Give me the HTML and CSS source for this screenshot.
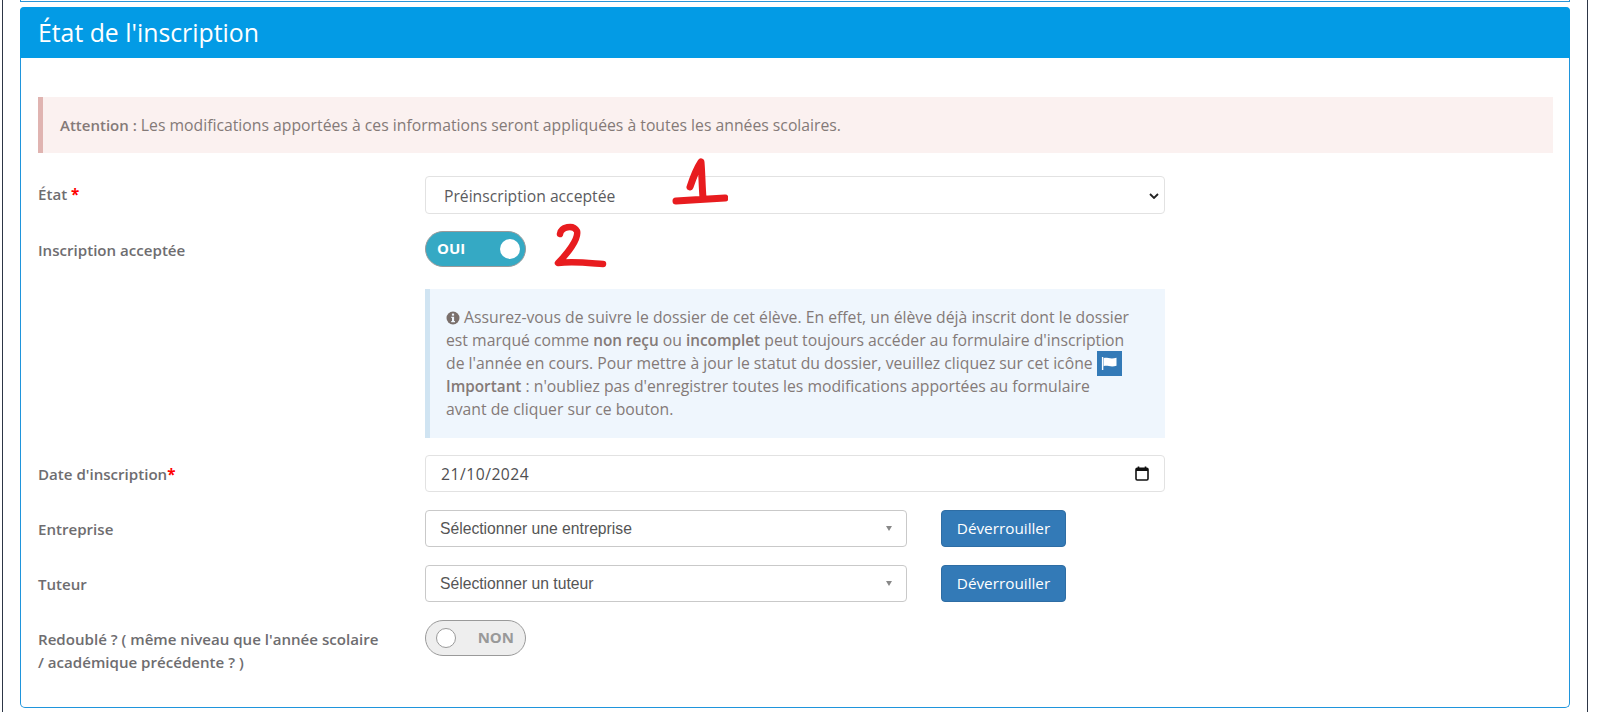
FILE: index.html
```html
<!DOCTYPE html>
<html lang="fr">
<head>
<meta charset="utf-8">
<title>État de l'inscription</title>
<link rel="stylesheet" href="styles.css">
</head>
<body>
<div class="page">
  <div class="prev-panel"></div>
  <section class="panel">
    <h2 class="panel-title">État de l'inscription</h2>
    <div class="panel-body">
      <div class="alert"><strong>Attention :</strong> Les modifications apportées à ces informations seront appliquées à toutes les années scolaires.</div>

      <div class="row row-state">
        <label class="label">État <span class="req">*</span></label>
        <div class="native-select wide"><span>Préinscription acceptée</span>
          <svg class="chev" width="10" height="6" viewBox="0 0 10 6"><path d="M1 1l4 4 4-4" fill="none" stroke="#222" stroke-width="1.800"/></svg>
        </div>
        <svg class="mark mark-1" width="60" height="52" viewBox="0 0 60 52"><path d="M22 33C25 24 29 14 33 8C34 20 34 32 35 44M8 47C24 46 42 45 57 44" fill="none" stroke="#e81c1f" stroke-width="7" stroke-linecap="round" stroke-linejoin="round"/></svg>
      </div>

      <div class="row row-toggle">
        <label class="label">Inscription acceptée</label>
        <div class="toggle on"><span class="toggle-text">OUI</span><span class="knob"></span></div>
        <svg class="mark mark-2" width="54" height="46" viewBox="0 0 54 46"><path d="M7 12C8 5 20 2 24 9C26 17 14 32 5 41C20 39 36 41 50 42" fill="none" stroke="#e81c1f" stroke-width="6.500" stroke-linecap="round" stroke-linejoin="round"/></svg>
      </div>

      <div class="row row-info">
        <div></div>
        <div class="info">
          <svg class="info-icon" width="14" height="14" viewBox="0 0 14 14"><circle cx="7" cy="7" r="6.500" fill="#7a6f6b"/><rect x="5.900" y="2.600" width="2.200" height="2" fill="#eff6fd"/><path d="M5.300 5.800H8.100V10H9V11.200H5.200V10H6V7H5.300Z" fill="#eff6fd"/></svg>
          Assurez-vous de suivre le dossier de cet élève. En effet, un élève déjà inscrit dont le dossier<br>est marqué comme <strong>non reçu</strong> ou <strong>incomplet</strong> peut toujours accéder au formulaire d'inscription<br>de l'année en cours. Pour mettre à jour le statut du dossier, veuillez cliquez sur cet icône <span class="flag-btn"><svg width="17" height="15" viewBox="0 0 17 15"><path d="M1.600 1V14" stroke="#fff" stroke-width="1.400"/><path d="M2.600 2.200C6 .8 8.800 3.800 15.500 1.800V9.800C9.500 11.800 6.500 8.800 2.600 10.200Z" fill="#fff"/></svg></span><br>
          <strong>Important</strong> : n'oubliez pas d'enregistrer toutes les modifications apportées au formulaire<br>avant de cliquer sur ce bouton.
        </div>
      </div>

      <div class="row row-date">
        <label class="label">Date d'inscription<span class="req">*</span></label>
        <div class="native-select wide date"><span>21/10/2024</span>
          <svg class="cal" width="14" height="15" viewBox="0 0 14 15"><path d="M3.500 0.500V3M10.500 0.500V3" stroke="#111" stroke-width="1.600"/><rect x="1" y="2.300" width="12" height="11.700" rx="1.200" fill="none" stroke="#111" stroke-width="1.600"/><rect x="1" y="2.300" width="12" height="2.700" fill="#111"/></svg>
        </div>
      </div>

      <div class="row row-select">
        <label class="label">Entreprise</label>
        <div class="select2"><span>Sélectionner une entreprise</span><i class="caret"></i></div>
        <button class="btn" type="button">Déverrouiller</button>
      </div>

      <div class="row row-select">
        <label class="label">Tuteur</label>
        <div class="select2"><span>Sélectionner un tuteur</span><i class="caret"></i></div>
        <button class="btn" type="button">Déverrouiller</button>
      </div>

      <div class="row row-last">
        <label class="label">Redoublé ? ( même niveau que l'année scolaire<br>/ académique précédente ? )</label>
        <div class="toggle off"><span class="knob"></span><span class="toggle-text">NON</span></div>
      </div>
    </div>
  </section>
</div>
</body>
</html>
```
FILE: styles.css
```css
* { box-sizing: border-box; }
html, body { margin: 0; height: 712px; overflow: hidden; background: #fff; }
body { font-family: "Open Sans", sans-serif; font-size: 15.750px; color: #847a78; }
.page {
  width: 1586px; height: 712px; margin-left: 2px;
  border-left: 1px solid #2d3646; border-right: 1px solid #2d3646;
  padding: 0 17px;
}
.prev-panel {
  height: 2px; border-bottom: 1px solid #2a94d6; border-left: 1px solid #2a94d6; border-right: 1px solid #2a94d6;
}
.panel {
  margin-top: 5px; height: 701px; border: 1px solid #1f95dc; border-top: 0; border-radius: 5px;
}
.panel-title {
  margin: 0 -1px; height: 51px; padding: 0 18px; background: #039be5; color: #fff;
  font-size: 24.800px; font-weight: 400; line-height: 51px; border-radius: 4px 4px 0 0;
}
.panel-body { padding: 39px 16px 0 17px; }
.alert {
  height: 56px; line-height: 56px; padding-left: 17px; background: #fbf1f0; border-left: 5px solid #e0b4b1;
}
.alert strong { font-size: 15px; font-weight: 600; }
.info strong { font-size: 15.300px; font-weight: 600; }
.row { display: grid; grid-template-columns: 387px 740px; position: relative; align-items: start; }
.label { font-weight: 600; color: #6e6d70; font-size: 15.100px; line-height: 23px; display: block; }
.req { color: #f00; font-weight: 700; }
.row-state { margin-top: 23px; }
.row-state .label { padding-top: 7px; }
.native-select {
  position: relative; height: 38px; display: flex; align-items: center; justify-content: space-between;
  background: #fff; border: 1px solid #e2e2e2; border-radius: 4px; padding: 2px 5px 0 18px;
  color: #5b5b5e; font-size: 15.700px;
}
.row-toggle { margin-top: 17px; }
.row-toggle .label { padding-top: 8px; }
.toggle {
  position: relative; width: 101px; height: 36px; border-radius: 18px; display: flex; align-items: center;
  border: 1px solid #9a9a9a; font-weight: 700; font-size: 15px;
}
.toggle.on { background: #35a9c4; color: #fff; padding: 0 5px 2px 11px; justify-content: space-between; }
.toggle.off { background: #eee; color: #999; padding: 0 11px 2px 10px; justify-content: space-between; }
.knob { width: 20px; height: 20px; border-radius: 50%; background: #fff; margin-top: 2px; }
.toggle.off .knob { border: 1px solid #9a9a9a; }
.mark { position: absolute; }
.mark-1 { left: 630px; top: -22px; }
.mark-2 { left: 515px; top: -9px; }
.row-info { margin-top: 22px; }
.info {
  height: 149px; background: #eff6fd; border-left: 5px solid #d0e4f2; padding: 17px 0 0 16px;
  line-height: 23px; color: #847a78; white-space: nowrap;
}
.info-icon { vertical-align: -2px; }
.flag-btn {
  display: inline-flex; width: 25px; height: 25px; margin: -4px 0 -2px; align-items: center; justify-content: center;
  background: #337ab7; vertical-align: middle;
}
.row-date { margin-top: 17px; }
.row-date .label { padding-top: 8px; }
.date { padding: 0 15px; letter-spacing: .5px; color: #4f4f52; height: 37px; }
.cal { flex: none; }
.row-select { margin-top: 18px; grid-template-columns: 387px 482px 34px 125px; }
.row-select .label { padding-top: 8px; }
.select2 {
  grid-column: 2; position: relative; height: 37px; border: 1px solid #c9c9c9; border-radius: 4px; background: #fff;
  font-family: "Liberation Sans", Arial, sans-serif; font-size: 15.700px; color: #555;
  padding: 0 14px; display: flex; align-items: center; justify-content: space-between;
}
.caret { width: 0; height: 0; border: 3.500px solid transparent; border-top: 5px solid #888; border-bottom: 0; }
.btn {
  grid-column: 4; height: 37px; border: 1px solid #2e6da4; border-radius: 4px; background: #337ab7; color: #fff;
  font-family: "Open Sans", sans-serif; font-size: 15.300px; padding: 0 0 2px;
}
.row-last { margin-top: 18px; }
.row-last .label { width: 350px; padding-top: 8px; white-space: nowrap; }
```
